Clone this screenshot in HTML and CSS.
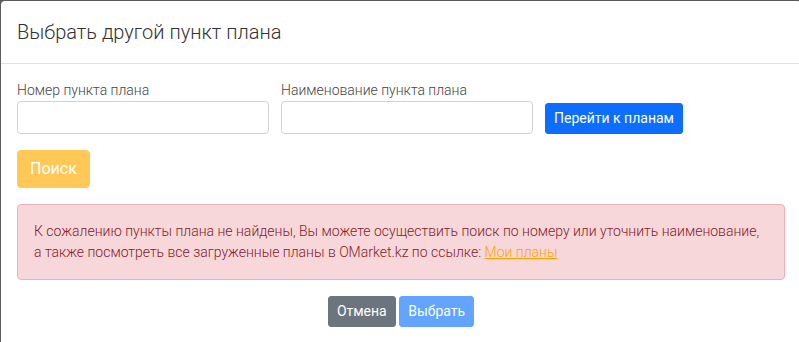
FILE: index.html
```html
<!DOCTYPE html>
<html lang="ru">
  <head>
    <meta charset="UTF-8" />
    <title>Выбрать другой пункт плана</title>
    <link rel="stylesheet" href="styles.css">
  </head>
  <body>
    <div class="modal">
      <!-- Header -->
      <div class="modal-header">
        <h5 class="modal-title">Выбрать другой пункт плана</h5>
      </div>

      <div class="modal-body">
        <!-- Search fields -->
        <div class="search-row">
          <div class="field">
            <label for="planNumber">Номер пункта плана</label>
            <input type="text" id="planNumber" class="form-control" />
          </div>
          <div class="field">
            <label for="planName">Наименование пункта плана</label>
            <input type="text" id="planName" class="form-control" />
          </div>
          <button type="button" class="btn btn-sm btn-primary">Перейти к планам</button>
        </div>

        <button type="button" class="btn btn-warning" disabled>Поиск</button>

        <!-- Nothing found message -->
        <div class="alert">
          К сожалению пункты плана не найдены, Вы можете осуществить поиск по номеру или уточнить наименование,
          а также посмотреть все загруженные планы в OMarket.kz по ссылке: <a href="#">Мои планы</a>
        </div>

        <div class="modal-footer">
          <button type="button" class="btn btn-sm btn-secondary">Отмена</button>
          <button type="button" class="btn btn-sm btn-primary" disabled>Выбрать</button>
        </div>
      </div>
    </div>
  </body>
</html>
```

FILE: styles.css
```css
/* Page behind the dialog */
body {
  margin: 0;
  background-color: #5b5b5b;
  font-family: Roboto, "Liberation Sans", sans-serif;
  font-size: 14px;
  font-weight: 300;
  line-height: 21px;
  color: #333;
  overflow: hidden;
}

.modal {
  width: 800px;
  height: 341px;
  margin: 1px 0 0 1px;
  background-color: #fff;
  border-radius: 4px 4px 0 0;
}

.modal-header {
  padding: 16px;
  border-bottom: 1px solid #dee2e6;
}

.modal-title {
  margin: 0;
  font-size: 20px;
  font-weight: 300;
  line-height: 30px;
  color: #333;
}

.modal-body {
  padding: 16px 16px 0;
}

.search-row {
  display: grid;
  grid-template-columns: 252px 252px auto;
  column-gap: 12px;
  align-items: end;
  justify-items: start;
  margin-bottom: 16px;
}

.field {
  width: 100%;
}

label {
  display: block;
  color: #444;
}

.form-control {
  display: block;
  width: 100%;
  height: 33px;
  padding: 4px 8px;
  box-sizing: border-box;
  border: 1px solid #ced4da;
  border-radius: 4px;
  font-family: inherit;
  font-size: 14px;
}

.btn {
  display: inline-block;
  padding: 6px 12px;
  border: 1px solid transparent;
  border-radius: 4px;
  font-family: inherit;
  font-size: 16px;
  font-weight: 400;
  line-height: 24px;
  color: #fff;
  cursor: pointer;
}

.btn-sm {
  padding: 4px 8px;
  font-size: 14px;
  line-height: 21px;
  border-radius: 3px;
}

.btn-primary {
  background-color: #0d6efd;
  border-color: #0d6efd;
}

.btn-primary:disabled {
  background-color: #62a4fe;
  border-color: #62a4fe;
}

.btn-secondary {
  background-color: #6c757d;
  border-color: #6c757d;
}

.btn-warning {
  background-color: #ffc857;
  border-color: #ffc857;
}

.btn:disabled {
  cursor: default;
}

.alert {
  margin: 16px 0;
  padding: 16px;
  border: 1px solid #f1b0b7;
  border-radius: 4px;
  background-color: #f8d7da;
  color: #842029;
}

.alert a {
  color: #ffa200;
}

.modal-footer {
  text-align: center;
}
```
